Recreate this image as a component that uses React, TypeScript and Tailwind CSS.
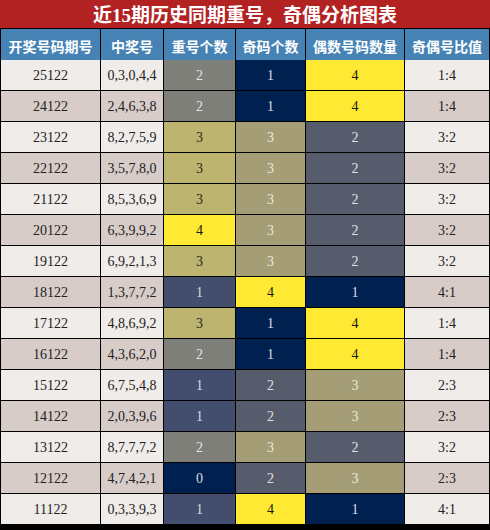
import React from "react";

type Row = [string, string, number, number, number, string];

const rows: Row[] = [
  ["25122", "0,3,0,4,4", 2, 1, 4, "1:4"],
  ["24122", "2,4,6,3,8", 2, 1, 4, "1:4"],
  ["23122", "8,2,7,5,9", 3, 3, 2, "3:2"],
  ["22122", "3,5,7,8,0", 3, 3, 2, "3:2"],
  ["21122", "8,5,3,6,9", 3, 3, 2, "3:2"],
  ["20122", "6,3,9,9,2", 4, 3, 2, "3:2"],
  ["19122", "6,9,2,1,3", 3, 3, 2, "3:2"],
  ["18122", "1,3,7,7,2", 1, 4, 1, "4:1"],
  ["17122", "4,8,6,9,2", 3, 1, 4, "1:4"],
  ["16122", "4,3,6,2,0", 2, 1, 4, "1:4"],
  ["15122", "6,7,5,4,8", 1, 2, 3, "2:3"],
  ["14122", "2,0,3,9,6", 1, 2, 3, "2:3"],
  ["13122", "8,7,7,7,2", 2, 3, 2, "3:2"],
  ["12122", "4,7,4,2,1", 0, 2, 3, "2:3"],
  ["11122", "0,3,3,9,3", 1, 4, 1, "4:1"],
];

const repeatCls: Record<number, string> = {
  0: "bg-[#002150] text-[#d8dce6]",
  1: "bg-[#434d6e] text-[#d8dbe4]",
  2: "bg-[#7f7f79] text-[#e4e4e0]",
  3: "bg-[#bdb46f] text-[#2a2a20]",
  4: "bg-[#ffe933] text-[#1a1a10]",
};

const oeCls: Record<number, string> = {
  1: "bg-[#002150] text-[#d8dce6]",
  2: "bg-[#575c6c] text-[#e0e0e4]",
  3: "bg-[#a59d75] text-[#ece8d6]",
  4: "bg-[#ffe933] text-[#1a1a10]",
};

const headers = ["开奖号码期号", "中奖号", "重号个数", "奇码个数", "偶数号码数量", "奇偶号比值"];

const serif = "font-['Liberation_Serif','Noto_Sans_CJK_SC',serif]";

export default function App() {
  return (
    <div className="w-[490px] h-[530px] bg-black overflow-hidden">
      <div className="h-[28px] mb-px bg-[#b22222] flex items-center justify-center">
        <span
          className="text-white font-bold text-[19px] leading-none"
          style={{ fontFamily: "'Liberation Serif', 'Noto Sans CJK SC', serif" }}
        >
          <span style={{ fontFamily: "'Noto Sans CJK SC', sans-serif" }}>近</span>
          15
          <span style={{ fontFamily: "'Noto Sans CJK SC', sans-serif" }}>期历史同期重号，奇偶分析图表</span>
        </span>
      </div>
      <div className="grid grid-cols-[99px_62px_71px_69px_98px_84px] gap-px px-px pb-px auto-rows-[30px]">
        {headers.map((h) => (
          <div
            key={h}
            className="h-[35px] bg-[#4682b4] text-white font-bold text-[14px] flex items-center justify-center font-['Noto_Sans_CJK_SC',sans-serif]"
          >
            {h}
          </div>
        ))}
        {rows.map((r, i) => {
          const base = i % 2 === 0 ? "bg-[#f0ecea]" : "bg-[#d8ccc9]";
          return (
            <React.Fragment key={r[0]}>
              <div className={`${base} ${serif} text-[14px] text-[#222] flex items-center justify-center`}>{r[0]}</div>
              <div className={`${base} ${serif} text-[14px] text-[#222] flex items-center justify-center`}>{r[1]}</div>
              <div className={`${repeatCls[r[2]]} ${serif} text-[14px] flex items-center justify-center`}>{r[2]}</div>
              <div className={`${oeCls[r[3]]} ${serif} text-[14px] flex items-center justify-center`}>{r[3]}</div>
              <div className={`${oeCls[r[4]]} ${serif} text-[14px] flex items-center justify-center`}>{r[4]}</div>
              <div className={`${base} ${serif} text-[14px] text-[#222] flex items-center justify-center`}>{r[5]}</div>
            </React.Fragment>
          );
        })}
      </div>
    </div>
  );
}
